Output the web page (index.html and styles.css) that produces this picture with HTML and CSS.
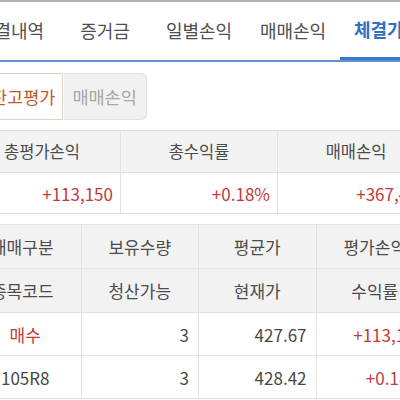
FILE: index.html
```html
<!DOCTYPE html>
<html lang="ko">
<head>
<meta charset="utf-8">
<link rel="stylesheet" href="styles.css">
</head>
<body>
<div class="page">
  <nav class="tabs">
    <div class="tab">체결내역</div>
    <div class="tab">증거금</div>
    <div class="tab">일별손익</div>
    <div class="tab">매매손익</div>
    <div class="tab active">체결가능</div>
  </nav>

  <div class="seg">
    <div class="seg-btn on">잔고평가</div>
    <div class="seg-btn off">매매손익</div>
  </div>

  <div class="summary">
    <div class="s-head">총평가손익</div>
    <div class="s-head">총수익률</div>
    <div class="s-head">매매손익</div>
    <div class="s-val">+113,150</div>
    <div class="s-val">+0.18%</div>
    <div class="s-val">+367,400</div>
  </div>

  <div class="grid">
    <div class="g-head">매매구분</div>
    <div class="g-head">보유수량</div>
    <div class="g-head">평균가</div>
    <div class="g-head">평가손익</div>
    <div class="g-head">종목코드</div>
    <div class="g-head">청산가능</div>
    <div class="g-head">현재가</div>
    <div class="g-head">수익률</div>

    <div class="g-cell center red">매수</div>
    <div class="g-cell">3</div>
    <div class="g-cell">427.67</div>
    <div class="g-cell red">+113,150</div>
    <div class="g-cell center">105R8</div>
    <div class="g-cell">3</div>
    <div class="g-cell">428.42</div>
    <div class="g-cell red">+0.18%</div>
  </div>
</div>
</body>
</html>
```

FILE: styles.css
```css
html, body {
  margin: 0;
  padding: 0;
  background: #fff;
  overflow: hidden;
  width: 400px;
  height: 400px;
}

body {
  font-family: "Noto Sans CJK KR", "Noto Sans", sans-serif;
  color: #4c4c4c;
  border-top: 2px solid #b3b3b3;
  box-sizing: border-box;
}

.page {
  margin-left: -36px;
  width: 472px;
}

.tabs {
  display: flex;
  height: 58px;
  border-bottom: 2px solid #5e92d2;
  box-sizing: content-box;
}

.tab {
  width: 94px;
  flex: none;
  font-size: 18px;
  color: #4f4f4f;
  display: flex;
  align-items: center;
  justify-content: center;
  padding-bottom: 2px;
  box-sizing: border-box;
  height: 58px;
}

.tab.active {
  color: #2f70c0;
  font-weight: bold;
  border-bottom: 3px solid #3a78c6;
}

.seg {
  display: flex;
  margin: 11px 0 0 18px;
  height: 47px;
}

.seg-btn {
  font-size: 17.5px;
  display: flex;
  align-items: center;
  padding: 0 8px;
  box-sizing: border-box;
}

.seg-btn.on {
  color: #c0582c;
  border: 1px solid #e6d0c2;
  background: #fff;
  border-radius: 6px 0 0 6px;
  padding-right: 7px;
}

.seg-btn.off {
  color: #a8a8a8;
  background: #f1f1f1;
  border: 1px solid #e0e0e0;
  border-left: none;
  border-radius: 0 6px 6px 0;
  padding: 0 9px 0 8px;
  margin-left: 1px;
}

.summary {
  display: grid;
  grid-template-columns: 157px 157px 157px;
  margin-top: 10px;
  border-top: 1px solid #dcdcdc;
  border-bottom: 1px solid #dcdcdc;
}

.s-head {
  background: #f3f3f3;
  height: 42px;
  font-size: 16.5px;
  color: #4c4c4c;
  display: flex;
  align-items: center;
  justify-content: center;
  border-right: 1px solid #e2e2e2;
  border-bottom: 1px solid #e2e2e2;
  padding-bottom: 2px;
  box-sizing: border-box;
}

.s-val {
  height: 40px;
  font-size: 17px;
  color: #c23a3a;
  display: flex;
  align-items: center;
  justify-content: flex-end;
  padding-right: 7px;
  border-right: 1px solid #e2e2e2;
  box-sizing: border-box;
}

.grid {
  display: grid;
  grid-template-columns: 117.5px 117.5px 117.5px 117.5px;
  margin-top: 10px;
  border-top: 1px solid #e2e2e2;
}

.g-head {
  background: #f2f2f2;
  height: 44px;
  font-size: 17px;
  color: #4c4c4c;
  display: flex;
  align-items: center;
  justify-content: center;
  border-right: 1px solid #e2e2e2;
  border-bottom: 1px solid #e2e2e2;
  box-sizing: border-box;
  padding-bottom: 1px;
}

.g-cell {
  height: 43px;
  font-size: 17px;
  color: #474747;
  display: flex;
  align-items: center;
  justify-content: flex-end;
  padding-right: 9px;
  border-right: 1px solid #e2e2e2;
  border-bottom: 1px solid #e2e2e2;
  box-sizing: border-box;
}

.g-cell.center {
  justify-content: center;
  padding: 0 0 0 6px;
}

.red {
  color: #c23a3a;
}

.g-cell.red {
  color: #c23a3a;
}
```
